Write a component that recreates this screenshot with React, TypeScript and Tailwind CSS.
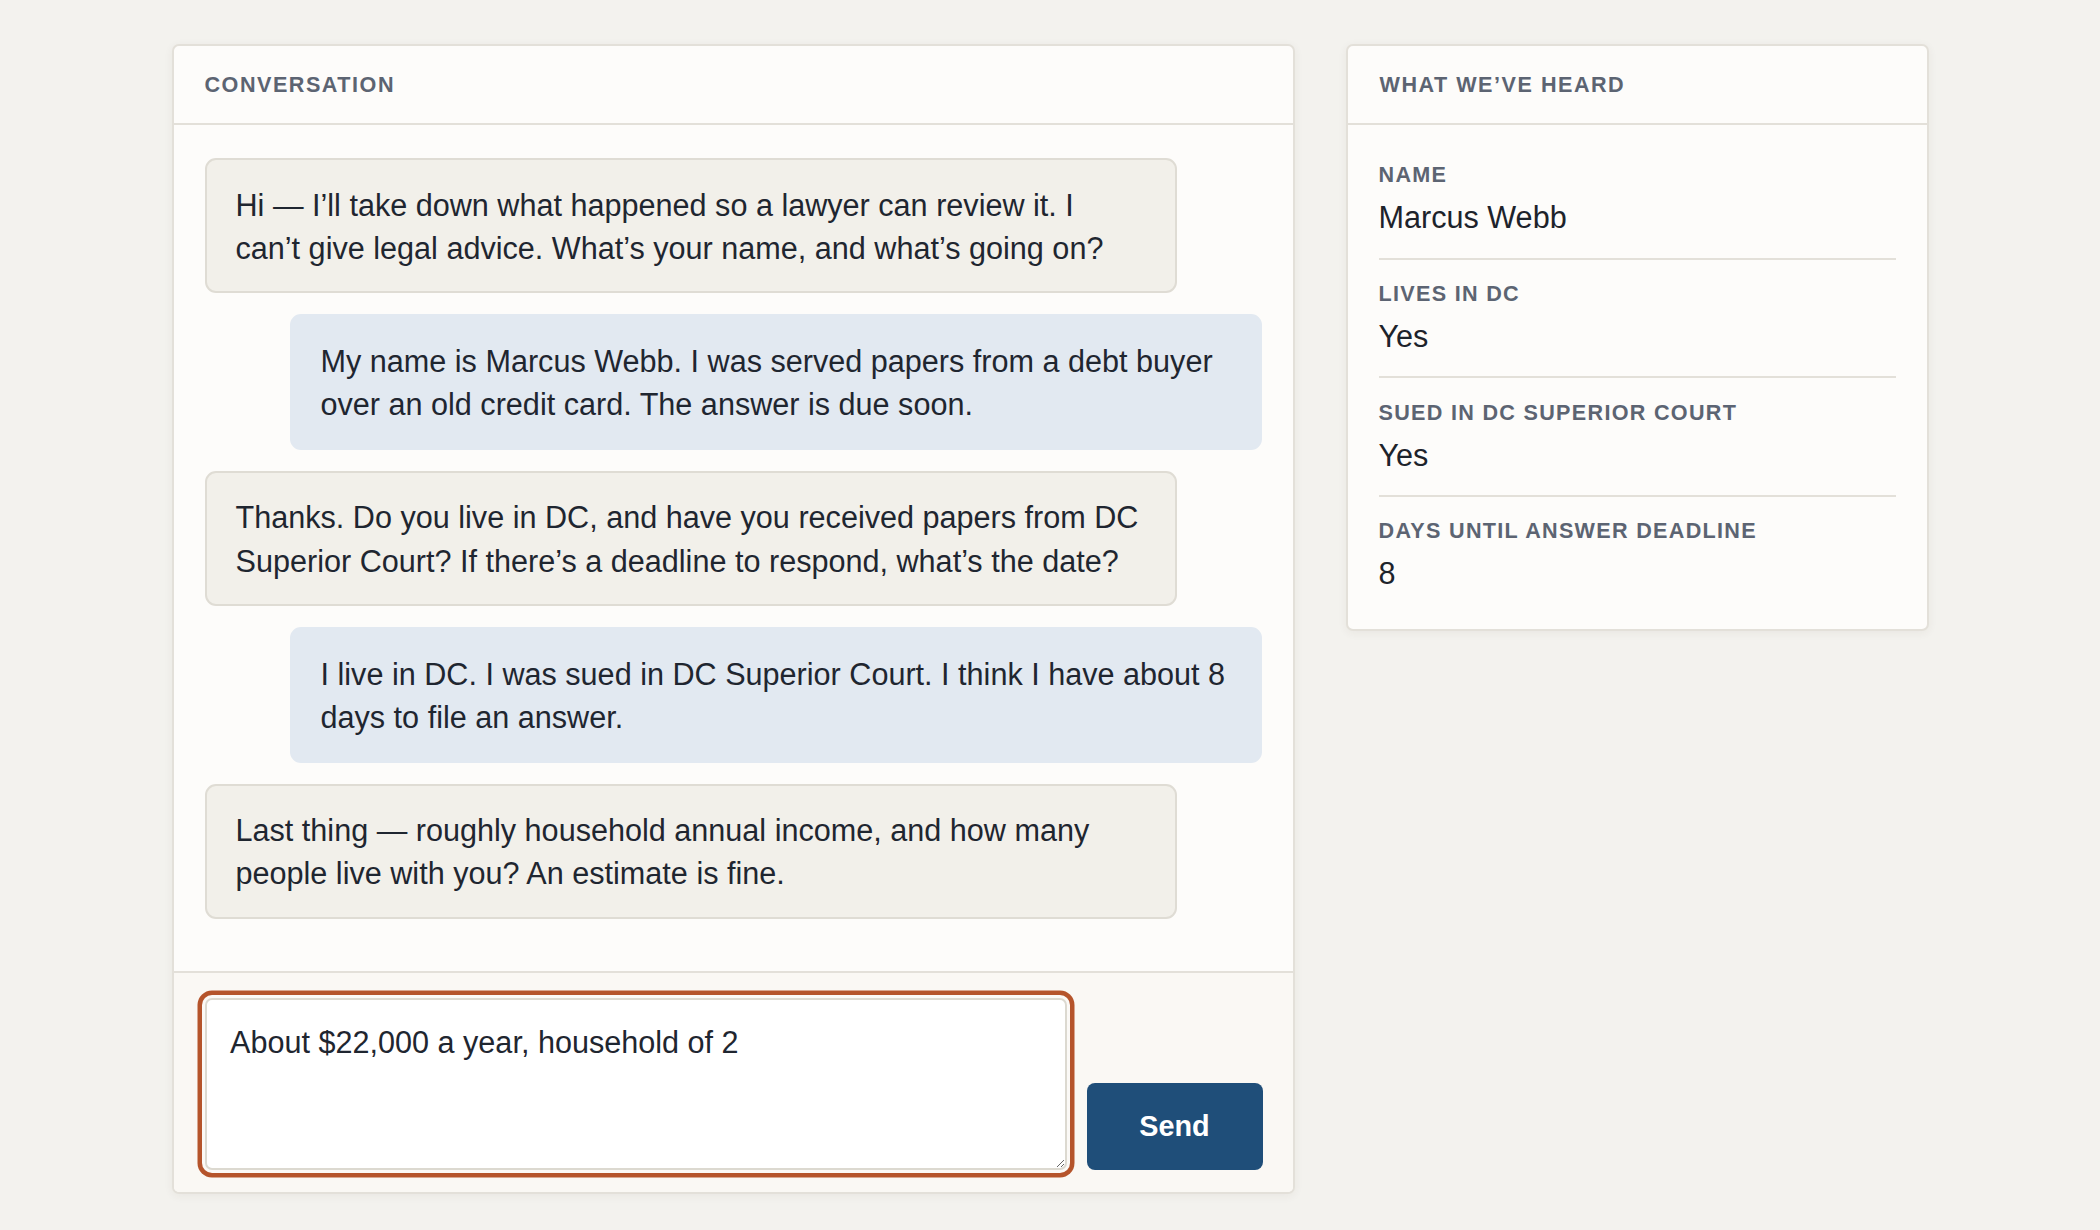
import React, { useEffect, useRef } from "react";

type Msg = { role: "bot" | "user"; text: string };

const messages: Msg[] = [
  {
    role: "bot",
    text: "Hi — I’ll take down what happened so a lawyer can review it. I can’t give legal advice. What’s your name, and what’s going on?",
  },
  {
    role: "user",
    text: "My name is Marcus Webb. I was served papers from a debt buyer over an old credit card. The answer is due soon.",
  },
  {
    role: "bot",
    text: "Thanks. Do you live in DC, and have you received papers from DC Superior Court? If there’s a deadline to respond, what’s the date?",
  },
  {
    role: "user",
    text: "I live in DC. I was sued in DC Superior Court. I think I have about 8 days to file an answer.",
  },
  {
    role: "bot",
    text: "Last thing — roughly household annual income, and how many people live with you? An estimate is fine.",
  },
];

const facts = [
  { label: "Name", value: "Marcus Webb" },
  { label: "Lives in DC", value: "Yes" },
  { label: "Sued in DC Superior Court", value: "Yes" },
  { label: "Days until answer deadline", value: "8" },
];

export default function App() {
  const ref = useRef<HTMLTextAreaElement>(null);
  useEffect(() => {
    const el = ref.current;
    if (el) {
      el.focus();
      const n = el.value.length;
      el.setSelectionRange(n, n);
    }
  }, []);

  return (
    <div className="min-h-screen w-full bg-[#f3f2ee] font-['Liberation_Sans',Arial,sans-serif] text-[#1f2630]">
      <div className="flex items-start justify-center gap-[51px] pt-[44px]">
        {/* Conversation panel */}
        <section className="flex h-[1150px] w-[1123px] flex-col overflow-hidden rounded-[7px] border-2 border-[#e3e0d9] bg-[#fdfcfa] shadow-[0_2px_10px_rgba(60,50,30,0.06)]">
          <header className="flex h-[79px] shrink-0 items-center border-b-2 border-[#e3e0d9] px-[31px]">
            <h2 className="text-[21.6px] font-semibold uppercase leading-[28px] tracking-[0.07em] text-[#5c6472]">
              Conversation
            </h2>
          </header>
          <div className="flex flex-1 flex-col gap-[21px] px-[31px] pt-[33px]">
            {messages.map((m, i) =>
              m.role === "bot" ? (
                <div
                  key={i}
                  className="max-w-[972px] self-start rounded-[11px] border-2 border-[#dfdcd4] bg-[#f2f0ea] pb-[21.5px] pl-[29px] pr-[31px] pt-[23.5px] text-[30.6px] leading-[43.2px]"
                >
                  {m.text}
                </div>
              ) : (
                <div
                  key={i}
                  className="max-w-[972px] self-end rounded-[11px] border-2 border-[#e2e9f1] bg-[#e2e9f1] pb-[21.5px] pl-[29px] pr-[31px] pt-[23.5px] text-[30.6px] leading-[43.2px]"
                >
                  {m.text}
                </div>
              )
            )}
          </div>
          <div className="flex shrink-0 items-end gap-[20px] border-t-2 border-[#e3e0d9] bg-[#faf8f4] pb-[22px] pl-[31.5px] pr-[30px] pt-[25px]">
            <textarea
              ref={ref}
              defaultValue="About $22,000 a year, household of 2"
              className="h-[172px] flex-1 rounded-[7px] border-2 border-[#dcd9d0] bg-white pl-[23px] pr-[20px] pt-[21px] text-[30.6px] leading-[43.2px] text-[#1f2630] caret-[#1f2630] shadow-[0_0_0_3px_#fbf9f6,0_0_0_7.5px_#b5542b] outline-none"
            />
            <button className="h-[87px] w-[176px] shrink-0 rounded-[8px] bg-[#1f4e79] text-[28.8px] font-bold text-white">
              Send
            </button>
          </div>
        </section>

        {/* What we've heard panel */}
        <aside className="w-[583px] overflow-hidden rounded-[7px] border-2 border-[#e3e0d9] bg-[#fdfcfa] shadow-[0_2px_10px_rgba(60,50,30,0.06)]">
          <header className="flex h-[79px] items-center border-b-2 border-[#e3e0d9] px-[32px]">
            <h2 className="text-[21.6px] font-semibold uppercase leading-[28px] tracking-[0.07em] text-[#5c6472]">
              What We’ve Heard
            </h2>
          </header>
          <div className="px-[31px] pb-[16px] pt-[16px]">
            {facts.map((f, i) => (
              <div
                key={f.label}
                className={
                  i < facts.length - 1
                    ? "border-b-2 border-[#e3e0d9] pb-[18px] pt-[20.4px]"
                    : "pb-[18px] pt-[20.4px]"
                }
              >
                <div className="mb-[7px] text-[21.6px] font-semibold uppercase leading-[28px] tracking-[0.06em] text-[#5c6472]">
                  {f.label}
                </div>
                <div className="text-[30.6px] leading-[43.2px] text-[#1d232b]">{f.value}</div>
              </div>
            ))}
          </div>
        </aside>
      </div>
    </div>
  );
}
